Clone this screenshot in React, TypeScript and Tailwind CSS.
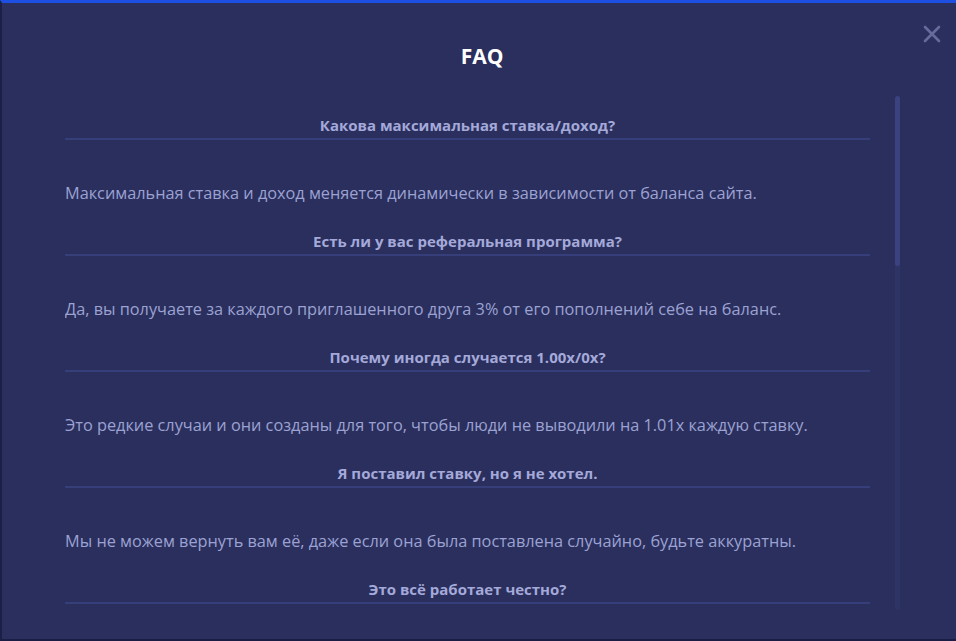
import React from "react";

const items = [
  {
    q: "Какова максимальная ставка/доход?",
    a: "Максимальная ставка и доход меняется динамически в зависимости от баланса сайта.",
  },
  {
    q: "Есть ли у вас реферальная программа?",
    a: "Да, вы получаете за каждого приглашенного друга 3% от его пополнений себе на баланс.",
  },
  {
    q: "Почему иногда случается 1.00x/0x?",
    a: "Это редкие случаи и они созданы для того, чтобы люди не выводили на 1.01x каждую ставку.",
  },
  {
    q: "Я поставил ставку, но я не хотел.",
    a: "Мы не можем вернуть вам её, даже если она была поставлена случайно, будьте аккуратны.",
  },
  {
    q: "Это всё работает честно?",
    a: "",
  },
];

export default function App() {
  return (
    <div
      className="w-[956px] h-[641px] bg-[#2a2f5d] border-t-[3px] border-t-[#1d50e2] border-l-2 border-l-[#1c2049] border-b-2 border-b-[#1a1e44] flex flex-col overflow-hidden relative"
      style={{ fontFamily: '"Open Sans", "Noto Sans", sans-serif' }}
    >
      <button className="absolute right-[14px] top-[21px] w-[20px] h-[20px] flex items-center justify-center">
        <svg width="18" height="18" viewBox="0 0 18 18">
          <path d="M2 2 L16 16 M16 2 L2 16" stroke="#656b9c" strokeWidth="2.6" strokeLinecap="round" />
        </svg>
      </button>
      <div className="h-[93px] flex items-start justify-center pt-[39px] pl-[6px]">
        <h1 className="text-[21px] leading-[28px] font-bold text-white">FAQ</h1>
      </div>
      <div className="flex h-[516px]">
        <div className="ml-[63px] w-[805px] overflow-hidden pt-[19px]">
          {items.map((it, i) => (
            <div key={i}>
              <div className="text-center text-[15px] leading-[20px] font-bold text-[#a4a9d9] pb-[3px] border-b-2 border-[#373f7a]">
                {it.q}
              </div>
              {it.a && (
                <div className="mt-[43px] mb-[28px] text-[16.3px] leading-[20px] text-[#9ca2d3]">
                  {it.a}
                </div>
              )}
            </div>
          ))}
        </div>
        <div className="ml-[25px] w-[5px] h-[514px] bg-[#2e3465] rounded-sm">
          <div className="w-[5px] h-[170px] bg-[#3b4280] rounded-sm" />
        </div>
      </div>
    </div>
  );
}
